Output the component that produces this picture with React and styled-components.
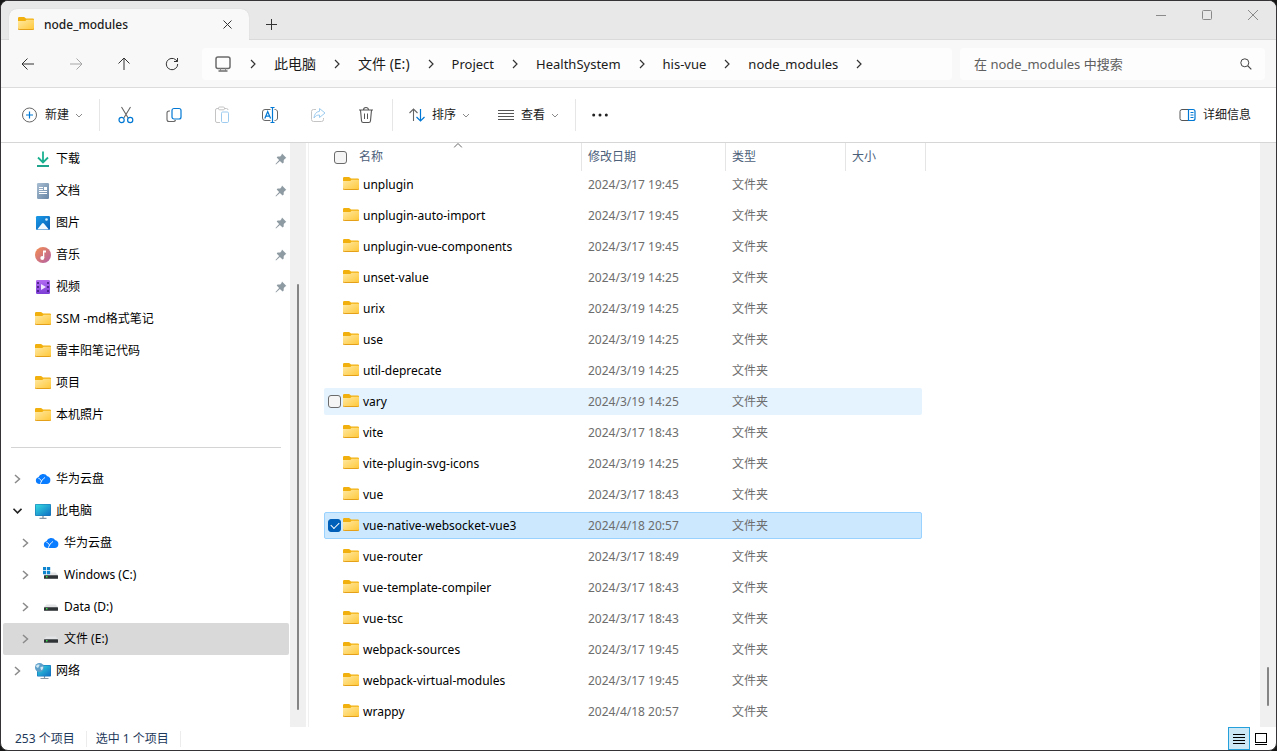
import React, { useState } from "react";
import styled, { createGlobalStyle } from "styled-components";

const DAY_17 = "2024/3/17 19:45";
const DAY_19 = "2024/3/19 14:25";
const DAY_17_EVENING = "2024/3/17 18:43";

const files = [
  { name: "unplugin", date: DAY_17 },
  { name: "unplugin-auto-import", date: DAY_17 },
  { name: "unplugin-vue-components", date: DAY_17 },
  { name: "unset-value", date: DAY_19 },
  { name: "urix", date: DAY_19 },
  { name: "use", date: DAY_19 },
  { name: "util-deprecate", date: DAY_19 },
  { name: "vary", date: DAY_19, hot: true },
  { name: "vite", date: DAY_17_EVENING },
  { name: "vite-plugin-svg-icons", date: DAY_19 },
  { name: "vue", date: DAY_17_EVENING },
  { name: "vue-native-websocket-vue3", date: "2024/4/18 20:57" },
  { name: "vue-router", date: "2024/3/17 18:49" },
  { name: "vue-template-compiler", date: DAY_17_EVENING },
  { name: "vue-tsc", date: DAY_17_EVENING },
  { name: "webpack-sources", date: DAY_17 },
  { name: "webpack-virtual-modules", date: DAY_17 },
  { name: "wrappy", date: "2024/4/18 20:57" },
];

const crumbs = [
  { label: "此电脑" },
  { label: "文件 (E:)" },
  { label: "Project", latin: true },
  { label: "HealthSystem", latin: true },
  { label: "his-vue", latin: true },
  { label: "node_modules", latin: true },
];

export default function App() {
  const [selected, setSelected] = useState(["vue-native-websocket-vue3"]);

  const toggle = (name) =>
    setSelected((prev) =>
      prev.includes(name) ? prev.filter((n) => n !== name) : [...prev, name]
    );

  return (
    <>
      <GlobalStyle />
      <Window>
        <TitleBar />
        <NavBar />
        <Toolbar />
        <Content>
          <Sidebar />
          <FileList selected={selected} toggle={toggle} />
        </Content>
        <StatusBar count={selected.length} />
      </Window>
    </>
  );
}

function TitleBar() {
  return (
    <TitleOuter>
      <Tab>
        <FolderIcon />
        <TabTitle>node_modules</TabTitle>
        <TabClose aria-label="关闭标签页">
          <LineIcon size={9} d="M0.5 0.5l8 8M8.5 0.5l-8 8" />
        </TabClose>
      </Tab>
      <NewTab aria-label="新标签页">
        <LineIcon size={11} d="M5.5 0v11M0 5.5h11" />
      </NewTab>
      <WindowButtons>
        <WindowButton aria-label="最小化">
          <LineIcon size={10} d="M0 5.5h10" />
        </WindowButton>
        <WindowButton aria-label="最大化">
          <LineIcon
            size={10}
            d="M1.5 0.5h7a1 1 0 0 1 1 1v7a1 1 0 0 1-1 1h-7a1 1 0 0 1-1-1v-7a1 1 0 0 1 1-1z"
          />
        </WindowButton>
        <WindowButton aria-label="关闭">
          <LineIcon size={10} d="M0 0l10 10M10 0L0 10" />
        </WindowButton>
      </WindowButtons>
    </TitleOuter>
  );
}

function NavBar() {
  return (
    <NavOuter>
      <NavButton aria-label="后退">
        <LineIcon size={14} d="M13 7H1.2M6.5 1.5L1 7l5.500 5.500" />
      </NavButton>
      <NavButton aria-label="前进" disabled>
        <LineIcon size={14} d="M1 7h11.800M7.500 1.500L13 7l-5.500 5.500" />
      </NavButton>
      <NavButton aria-label="向上">
        <LineIcon size={14} d="M7 13V1.200M1.500 6.500L7 1l5.500 5.500" />
      </NavButton>
      <NavButton aria-label="刷新">
        <LineIcon
          size={14}
          d="M12.700 7A5.700 5.700 0 1 1 10.800 2.800L12.500 4.400M12.500 1v3.500H9"
        />
      </NavButton>
      <Address>
        <svg width="18" height="18" viewBox="0 0 18 18" fill="none">
          <rect
            x="2"
            y="2"
            width="14"
            height="11.500"
            rx="2"
            stroke="#6b6b6b"
            strokeWidth="1.500"
          />
          <path d="M6.500 13.500v2M11.500 13.500v2" stroke="#8a8a8a" />
          <path d="M4.500 16h9" stroke="#6b6b6b" strokeWidth="1.400" />
        </svg>
        <CrumbArrow />
        {crumbs.map((crumb) => (
          <React.Fragment key={crumb.label}>
            <Crumb href="#" $latin={crumb.latin}>
              {crumb.label}
            </Crumb>
            <CrumbArrow />
          </React.Fragment>
        ))}
      </Address>
      <Search>
        <SearchInput
          type="text"
          aria-label="搜索"
          placeholder="在 node_modules 中搜索"
        />
        <svg width="12" height="12" viewBox="0 0 12 12" fill="none">
          <circle cx="4.800" cy="4.800" r="4" stroke="#444" />
          <path d="M7.800 7.800L11.300 11.300" stroke="#444" strokeWidth="1.200" />
        </svg>
      </Search>
    </NavOuter>
  );
}

function Toolbar() {
  return (
    <ToolbarOuter>
      <TextButton>
        <svg width="16" height="16" viewBox="0 0 16 16" fill="none">
          <circle cx="7.500" cy="8" r="7" stroke="#666" />
          <path d="M7.500 4.500v7M4 8h7" stroke="#0078d4" strokeWidth="1.200" />
        </svg>
        新建
        <DropArrow />
      </TextButton>
      <Divider />
      <IconButton aria-label="剪切">
        <svg width="16" height="18" viewBox="0 0 16 18" fill="none">
          <path
            d="M3.500 1l6.700 11M12.500 1L5.800 12"
            stroke="#666"
            strokeWidth="1.100"
          />
          <circle cx="3.600" cy="14" r="2.600" stroke="#0078d4" strokeWidth="1.200" />
          <circle cx="12.200" cy="14" r="2.600" stroke="#0078d4" strokeWidth="1.200" />
        </svg>
      </IconButton>
      <IconButton aria-label="复制">
        <svg width="16" height="16" viewBox="0 0 16 16" fill="none">
          <path
            d="M4 4H3a2 2 0 0 0-2 2v6.500a2 2 0 0 0 2 2h4.500a2 2 0 0 0 2-1.500"
            stroke="#666"
            strokeWidth="1.100"
          />
          <rect
            x="6"
            y="1.500"
            width="9"
            height="10.500"
            rx="2"
            stroke="#0078d4"
            strokeWidth="1.200"
          />
        </svg>
      </IconButton>
      <IconButton aria-label="粘贴" disabled>
        <svg width="16" height="18" viewBox="0 0 16 18" fill="none">
          <path
            d="M5 2.500H3a1.500 1.500 0 0 0-1.500 1.500v11A1.500 1.500 0 0 0 3 16.500h3M10 2.500h2.500A1.500 1.500 0 0 1 14 4"
            stroke="#c4c4c4"
          />
          <rect x="4.500" y="1" width="6" height="2.800" rx="1.200" stroke="#c4c4c4" />
          <rect x="7.500" y="6" width="7" height="10.500" rx="1.200" stroke="#9ccbef" />
        </svg>
      </IconButton>
      <IconButton aria-label="重命名">
        <svg width="18" height="16" viewBox="0 0 18 16" fill="none">
          <path
            d="M9.500 2.500H4a2.500 2.500 0 0 0-2.500 2.500v6A2.500 2.500 0 0 0 4 13.500h5.500M13.500 2.500A2.500 2.500 0 0 1 16.500 5v6a2.500 2.500 0 0 1-3 2.500"
            stroke="#666"
          />
          <path
            d="M3.800 11.500L6.700 4.500l2.900 7M4.800 9.200h3.800"
            stroke="#0078d4"
            strokeWidth="1.200"
          />
          <path d="M9.500 0.500h4M9.500 15.500h4M11.500 0.500v15" stroke="#0078d4" strokeWidth="1.200" />
        </svg>
      </IconButton>
      <IconButton aria-label="共享" disabled>
        <svg width="16" height="16" viewBox="0 0 16 16" fill="none">
          <path
            d="M6 2.500H3.500a2 2 0 0 0-2 2v8a2 2 0 0 0 2 2h8a2 2 0 0 0 2-2V11"
            stroke="#c4c4c4"
          />
          <path
            d="M9.500 1.500L15 6l-5.500 4.500V8C7 8 5.500 8.800 4 11c.2-3.500 2-6.300 5.500-6.700z"
            stroke="#9ccbef"
            strokeLinejoin="round"
          />
        </svg>
      </IconButton>
      <IconButton aria-label="删除">
        <svg width="16" height="18" viewBox="0 0 16 18" fill="none">
          <path
            d="M1 4h14M5.500 4a2.500 2.500 0 0 1 5 0M2.500 4l1 10.800a1.800 1.800 0 0 0 1.800 1.700h5.400a1.800 1.800 0 0 0 1.800-1.700l1-10.800"
            stroke="#555"
            strokeWidth="1.100"
          />
          <path d="M6.500 7.500v5.500M9.500 7.500v5.500" stroke="#555" />
        </svg>
      </IconButton>
      <Divider />
      <TextButton>
        <svg width="16" height="16" viewBox="0 0 16 16" fill="none">
          <path d="M4.500 14V2M0.500 6L4.500 2l4 4" stroke="#666" strokeWidth="1.100" />
          <path d="M11.500 2v12M7.500 10l4 4 4-4" stroke="#0078d4" strokeWidth="1.200" />
        </svg>
        排序
        <DropArrow />
      </TextButton>
      <TextButton>
        <svg width="16" height="16" viewBox="0 0 16 16" fill="none">
          <path d="M0 3.500h16M0 6.500h16M0 9.500h16M0 12.500h16" stroke="#555" />
        </svg>
        查看
        <DropArrow />
      </TextButton>
      <Divider />
      <MoreButton aria-label="更多">
        <svg width="16" height="4" viewBox="0 0 16 4" fill="#222">
          <circle cx="1.700" cy="2" r="1.500" />
          <circle cx="8" cy="2" r="1.500" />
          <circle cx="14.300" cy="2" r="1.500" />
        </svg>
      </MoreButton>
      <DetailsButton>
        <svg width="17" height="14" viewBox="0 0 17 14" fill="none">
          <path
            d="M9.500 1.500H3a2 2 0 0 0-2 2v7a2 2 0 0 0 2 2h6.500"
            stroke="#555"
          />
          <path
            d="M9.500 1.500H14a2 2 0 0 1 2 2v7a2 2 0 0 1-2 2H9.500z"
            stroke="#0078d4"
            strokeWidth="1.200"
          />
          <path d="M11.500 4.500h3M11.500 7h3M11.500 9.500h3" stroke="#0078d4" />
        </svg>
        详细信息
      </DetailsButton>
    </ToolbarOuter>
  );
}

const pinned = [
  { label: "下载", icon: <DownloadIcon />, pin: true },
  { label: "文档", icon: <DocumentIcon />, pin: true },
  { label: "图片", icon: <PictureIcon />, pin: true },
  { label: "音乐", icon: <MusicIcon />, pin: true },
  { label: "视频", icon: <VideoIcon />, pin: true },
  { label: "SSM -md格式笔记", icon: <FolderIcon /> },
  { label: "雷丰阳笔记代码", icon: <FolderIcon /> },
  { label: "项目", icon: <FolderIcon /> },
  { label: "本机照片", icon: <FolderIcon /> },
];

const tree = [
  { label: "华为云盘", icon: <CloudIcon />, arrow: "right" },
  { label: "此电脑", icon: <ComputerIcon />, arrow: "down" },
  { label: "华为云盘", icon: <CloudIcon />, arrow: "right", depth: 1 },
  { label: "Windows (C:)", icon: <DriveIcon system />, arrow: "right", depth: 1 },
  { label: "Data (D:)", icon: <DriveIcon />, arrow: "right", depth: 1 },
  { label: "文件 (E:)", icon: <DriveIcon />, arrow: "right", depth: 1, active: true },
  { label: "网络", icon: <NetworkIcon />, arrow: "right" },
];

function Sidebar() {
  return (
    <SidebarOuter>
      <Tree>
        {pinned.map((item) => (
          <TreeItem key={item.label} item={item} />
        ))}
        <TreeDivider />
        {tree.map((item, i) => (
          <TreeItem key={i} item={item} />
        ))}
      </Tree>
      <ScrollTrack>
        <SideThumb />
      </ScrollTrack>
    </SidebarOuter>
  );
}

function TreeItem({ item }) {
  return (
    <li>
      <TreeButton
        $depth={item.depth || 0}
        $active={item.active}
        aria-expanded={item.arrow ? item.arrow === "down" : undefined}
      >
        <Expander>
          {item.arrow === "right" && (
            <svg width="8" height="10" viewBox="0 0 8 10" fill="none">
              <path d="M2 1l4.500 4L2 9" stroke="#8a8a8a" strokeWidth="1.500" />
            </svg>
          )}
          {item.arrow === "down" && (
            <svg width="10" height="8" viewBox="0 0 10 8" fill="none">
              <path d="M1.500 1.800l4 4 4-4" stroke="#222" strokeWidth="1.600" />
            </svg>
          )}
        </Expander>
        {item.icon}
        <TreeLabel>{item.label}</TreeLabel>
        {item.pin && <PinIcon />}
      </TreeButton>
    </li>
  );
}

function FileList({ selected, toggle }) {
  return (
    <Main>
      <TableArea>
        <Table>
          <Head>
            <HeadRow>
              <NameHead>
                <Check type="checkbox" aria-label="全选" />
                名称
                <SortMark width="9" height="5" viewBox="0 0 9 5" fill="none">
                  <path d="M0.500 4.500l4-4 4 4" stroke="#666" />
                </SortMark>
              </NameHead>
              <HeadCell>修改日期</HeadCell>
              <HeadCell>类型</HeadCell>
              <HeadCell>大小</HeadCell>
            </HeadRow>
          </Head>
          <Body>
            {files.map((file) => {
              const on = selected.includes(file.name);
              return (
                <Row key={file.name} $hot={file.hot} $selected={on}>
                  <NameCell>
                    <Check
                      type="checkbox"
                      aria-label={file.name}
                      checked={on}
                      onChange={() => toggle(file.name)}
                    />
                    <FolderIcon />
                    <span>{file.name}</span>
                  </NameCell>
                  <Cell>{file.date}</Cell>
                  <Cell>文件夹</Cell>
                  <Cell />
                </Row>
              );
            })}
          </Body>
        </Table>
      </TableArea>
      <ScrollTrack>
        <MainThumb />
      </ScrollTrack>
    </Main>
  );
}

function StatusBar({ count }) {
  return (
    <StatusOuter>
      <StatusText>253 个项目</StatusText>
      <StatusText>选中 {count} 个项目</StatusText>
      <ViewButtons>
        <ViewButton aria-label="详细信息视图" aria-pressed="true" $active>
          <svg width="14" height="12" viewBox="0 0 14 12" fill="none">
            <path d="M1 1.500h12M1 4.500h12M1 7.500h12M1 10.500h12" stroke="#000" />
          </svg>
        </ViewButton>
        <ViewButton aria-label="大图标视图" aria-pressed="false">
          <svg width="14" height="14" viewBox="0 0 14 14" fill="none">
            <rect x="1.500" y="1.500" width="11" height="9" stroke="#000" />
            <path d="M1 12.500h12" stroke="#000" />
          </svg>
        </ViewButton>
      </ViewButtons>
    </StatusOuter>
  );
}

/* icons */

function LineIcon({ size, d }) {
  return (
    <svg width={size} height={size} viewBox={`0 0 ${size} ${size}`} fill="none">
      <path d={d} stroke="currentColor" />
    </svg>
  );
}

function CrumbArrow() {
  return (
    <svg width="8" height="10" viewBox="0 0 8 10" fill="none">
      <path d="M2 1l4 4-4 4" stroke="#333" strokeWidth="1.200" />
    </svg>
  );
}

function DropArrow() {
  return (
    <ArrowSvg width="8" height="5" viewBox="0 0 8 5" fill="none">
      <path d="M1 1l3 3 3-3" stroke="#8a8a8a" />
    </ArrowSvg>
  );
}

function FolderIcon() {
  return (
    <svg width="16" height="15" viewBox="0 0 16 15">
      <defs>
        <linearGradient id="folder" x1="0" y1="0" x2="1" y2="1">
          <stop offset="0" stopColor="#ffe9a4" />
          <stop offset="1" stopColor="#ffc736" />
        </linearGradient>
      </defs>
      <path
        d="M0 1.200A1.200 1.200 0 0 1 1.200 0h4.600c.5 0 .8.200 1.100.500L8 1.500h6.800A1.200 1.200 0 0 1 16 2.700V7H0z"
        fill="#f2b00e"
      />
      <path
        d="M0 4h6.500c.6 0 1-.2 1.400-.6l.6-.7H15.200a.8.8 0 0 1 .8.800v8.300A1.200 1.200 0 0 1 14.800 13H1.200A1.200 1.200 0 0 1 0 11.800z"
        fill="url(#folder)"
      />
      <path
        d="M0 11.600A1.300 1.300 0 0 0 1.300 12.500h13.400a1.300 1.300 0 0 0 1.300-.9"
        fill="none"
        stroke="#e5a01a"
      />
    </svg>
  );
}

function DownloadIcon() {
  return (
    <svg width="16" height="16" viewBox="0 0 16 16" fill="none">
      <path d="M8 0.500v11M3 6.500l5 5 5-5" stroke="#1bb08f" strokeWidth="1.800" />
      <path d="M2 15h12" stroke="#1fa58d" strokeWidth="1.800" />
    </svg>
  );
}

function DocumentIcon() {
  return (
    <svg width="16" height="16" viewBox="0 0 16 16">
      <defs>
        <linearGradient id="doc" x1="0" y1="0" x2="1" y2="1">
          <stop offset="0" stopColor="#a9bed2" />
          <stop offset="1" stopColor="#6785a6" />
        </linearGradient>
      </defs>
      <rect x="2" width="12" height="16" rx="1.200" fill="url(#doc)" />
      <path
        d="M4 4.500h4M4 6.500h4M4 8.500h8M4 10.500h8"
        stroke="#fff"
        strokeWidth="1.100"
      />
      <rect x="9" y="4" width="3" height="3" fill="#fff" />
    </svg>
  );
}

function PictureIcon() {
  return (
    <svg width="16" height="16" viewBox="0 0 16 16">
      <defs>
        <linearGradient id="pic" x1="0" y1="0" x2="1" y2="1">
          <stop offset="0" stopColor="#1a9be8" />
          <stop offset="1" stopColor="#0a5eb5" />
        </linearGradient>
      </defs>
      <rect x="1" y="1" width="14" height="14" rx="1.200" fill="url(#pic)" />
      <path d="M2.200 14.500L7 8.600a1.200 1.200 0 0 1 1.900 0l4.900 5.900z" fill="#f3f9ff" />
      <circle cx="11.500" cy="4.500" r="1.300" fill="#d4efff" />
    </svg>
  );
}

function MusicIcon() {
  return (
    <svg width="16" height="16" viewBox="0 0 16 16">
      <defs>
        <linearGradient id="music" x1="0" y1="0" x2="1" y2="1">
          <stop offset="0.100" stopColor="#ee8a58" />
          <stop offset="1" stopColor="#b25fa6" />
        </linearGradient>
      </defs>
      <circle cx="8" cy="8" r="8" fill="url(#music)" />
      <path d="M8 3.500h3v2H9.300v5.500H8z" fill="#fff" />
      <circle cx="7.300" cy="11" r="2" fill="#fff" />
    </svg>
  );
}

function VideoIcon() {
  return (
    <svg width="16" height="16" viewBox="0 0 16 16">
      <defs>
        <linearGradient id="video" x1="0" y1="0" x2="0" y2="1">
          <stop offset="0" stopColor="#b36cf2" />
          <stop offset="1" stopColor="#7d3ed6" />
        </linearGradient>
      </defs>
      <rect x="1" y="1" width="14" height="14" rx="1.200" fill="url(#video)" />
      <path
        d="M2.200 4h1.600M2.200 8h1.600M2.200 12h1.600M12.200 4h1.600M12.200 8h1.600M12.200 12h1.600"
        stroke="#3d1a78"
        strokeWidth="1.800"
      />
      <path d="M6 5l5 3-5 3z" fill="#f1e6ff" />
    </svg>
  );
}

function CloudIcon() {
  return (
    <svg width="16" height="16" viewBox="0 0 16 16">
      <path
        d="M4 13a3.400 3.400 0 0 1-.5-6.700A4.900 4.900 0 0 1 12.300 5.300 3.900 3.900 0 0 1 11.700 13z"
        fill="#0a7cff"
      />
      <path
        d="M3.500 7.500c1.800.2 2.500 1.500 3 3M5.300 12.800c1-2.800 2.500-5 4.700-6.300"
        fill="none"
        stroke="#fff"
        strokeWidth="0.900"
      />
    </svg>
  );
}

function ComputerIcon() {
  return (
    <svg width="16" height="16" viewBox="0 0 16 16">
      <defs>
        <linearGradient id="screen" x1="0" y1="0" x2="1" y2="1">
          <stop offset="0" stopColor="#35dbe0" />
          <stop offset="1" stopColor="#0f6fc4" />
        </linearGradient>
      </defs>
      <path d="M8 12v3M4.500 15.500h7" stroke="#8796a5" strokeWidth="1.400" />
      <rect x="0" y="1" width="16" height="12" rx="1" fill="#1b74b5" />
      <rect x="0.600" y="1.600" width="14.800" height="10.800" rx="0.600" fill="url(#screen)" />
    </svg>
  );
}

function DriveIcon({ system }) {
  return (
    <svg width="16" height="16" viewBox="0 0 16 16">
      <path d="M3.500 5.500h9L15 8H1z" fill="#e2e4e6" />
      <rect x="1" y="8" width="14" height="4" rx="0.500" fill="#5b5e61" />
      <rect x="1" y="9" width="14" height="2" fill="#2f3235" />
      <rect x="3" y="9" width="1.500" height="1.500" fill="#37e04c" />
      {system && (
        <>
          <rect x="0" y="0" width="7.500" height="7.500" fill="#fff" />
          <path
            d="M0 0h3.200v3.200H0zM4 0h3.200v3.200H4zM0 4h3.200v3.200H0zM4 4h3.200v3.200H4z"
            fill="#0f84cf"
          />
        </>
      )}
    </svg>
  );
}

function NetworkIcon() {
  return (
    <svg width="16" height="16" viewBox="0 0 16 16">
      <path d="M9.500 13v2.500M5.500 15.500h8" stroke="#8796a5" strokeWidth="1.200" />
      <rect x="2" y="2" width="14" height="11.500" rx="0.800" fill="#1673bd" />
      <rect x="2.600" y="2.600" width="12.800" height="10.300" fill="url(#screen)" />
      <circle cx="4.500" cy="4.500" r="4.500" fill="#5d9fc9" />
      <path
        d="M1 3c1-1.600 2.600-1.700 3.600-1.500 0 1.500-1 2-1.300 3.200C2.500 5 1.200 4.500 1 3zM5.500 4l2.600-.5c.4 1.500-.3 2.800-1.400 3.700-1-.6-1.400-1.900-1.200-3.200z"
        fill="#cfe8f3"
      />
    </svg>
  );
}

function PinIcon() {
  return (
    <svg width="12" height="12" viewBox="0 0 12 12">
      <path
        d="M7 0.600L11.400 5 10.200 5.600 8.800 7 8.600 9.700 7.600 10.600 4.900 7.900 1 11.500 0.500 11 4.100 7.100 1.700 4.500 2.600 3.600 5.200 3.500 6.500 2z"
        fill="#8f9ba3"
      />
    </svg>
  );
}

/* styles */

const GlobalStyle = createGlobalStyle`
  * {
    box-sizing: border-box;
  }

  body {
    margin: 0;
    background: #161616;
    font: 12px/16px "Noto Sans", "Noto Sans CJK SC", sans-serif;
    color: #000;
  }

  button,
  input {
    font: inherit;
    color: inherit;
  }

  button {
    padding: 0;
    border: none;
    background: none;
  }

  svg {
    flex-shrink: 0;
  }
`;

const Window = styled.div`
  display: flex;
  flex-direction: column;
  height: 100vh;
  border: 1px solid #353335;
  border-radius: 8px;
  background: #fff;
  overflow: hidden;
`;

const TitleOuter = styled.header`
  display: flex;
  flex: 0 0 39px;
  padding-left: 8px;
  background: #e8e8e8;
  border-bottom: 1px solid #dadada;
`;

const Tab = styled.div`
  display: flex;
  align-items: center;
  width: 240px;
  margin: 8px 0 -1px;
  padding: 0 17px 0 9px;
  border-radius: 8px 8px 0 0;
  background: #f8f8f8;
  box-shadow: 0 0 1px #c4c4c4;
  clip-path: inset(-2px -2px 0 -2px);
`;

const TabTitle = styled.span`
  flex: 1;
  margin-left: 10px;
  font-weight: 500;
  color: #1b1b1b;
`;

const TabClose = styled.button`
  display: flex;
  color: #333;
`;

const NewTab = styled.button`
  display: flex;
  align-items: center;
  justify-content: center;
  width: 45px;
  padding-top: 8px;
  color: #333;
`;

const WindowButtons = styled.div`
  display: flex;
  margin-left: auto;
`;

const WindowButton = styled.button`
  display: flex;
  align-items: center;
  justify-content: center;
  width: 46px;
  height: 28px;
  color: #8a8a8a;
`;

const NavOuter = styled.nav`
  display: flex;
  align-items: center;
  flex: 0 0 48px;
  padding: 0 11px 0 3px;
  background: #f8f8f8;
  border-bottom: 1px solid #dcdcdc;
`;

const NavButton = styled.button`
  display: flex;
  align-items: center;
  justify-content: center;
  width: 48px;
  height: 32px;
  color: #333;

  &:disabled {
    color: #a6a6a6;
  }
`;

const Address = styled.div`
  display: flex;
  align-items: center;
  gap: 17px;
  flex: 1;
  min-width: 0;
  height: 32px;
  margin-left: 6px;
  padding-left: 12px;
  border-radius: 4px;
  background: #fdfdfd;
  overflow: hidden;
`;

const Crumb = styled.a`
  font-size: ${(props) => (props.$latin ? "13px" : "14px")};
  line-height: 20px;
  white-space: nowrap;
  text-decoration: none;
  color: #1b1b1b;
`;

const Search = styled.label`
  display: flex;
  align-items: center;
  flex: 0 0 305px;
  height: 32px;
  margin-left: 8px;
  padding: 0 13px 0 14px;
  border-radius: 4px;
  background: #fdfdfd;
`;

const SearchInput = styled.input`
  flex: 1;
  min-width: 0;
  padding: 0;
  border: none;
  outline: none;
  background: none;
  font-size: 13px;
  line-height: 20px;

  &::placeholder {
    color: #606060;
  }
`;

const ToolbarOuter = styled.div`
  display: flex;
  align-items: center;
  flex: 0 0 55px;
  padding: 0 11px 0 7px;
  border-bottom: 1px solid #d6d6d6;
`;

const TextButton = styled.button`
  display: flex;
  align-items: center;
  gap: 7px;
  height: 32px;
  padding: 0 14px;
  white-space: nowrap;
  color: #1b1b1b;
`;

const ArrowSvg = styled.svg`
  margin-left: -1px;
`;

const IconButton = styled.button`
  display: flex;
  align-items: center;
  justify-content: center;
  width: 48px;
  height: 32px;
`;

const MoreButton = styled(IconButton)`
  width: 44px;
`;

const DetailsButton = styled(TextButton)`
  margin-left: auto;
`;

const Divider = styled.span`
  width: 1px;
  height: 32px;
  margin: 0 2px;
  background: #e6e6e6;
`;

const Content = styled.div`
  display: flex;
  flex: 1;
  min-height: 0;
`;

const SidebarOuter = styled.aside`
  display: flex;
  flex: 0 0 305px;
`;

const Tree = styled.ul`
  flex: 1;
  margin: 0;
  padding: 0 1px 0 2px;
  list-style: none;
  overflow: hidden;
`;

const TreeButton = styled.button`
  display: flex;
  align-items: center;
  width: 100%;
  height: 32px;
  padding-left: ${(props) => 6 + props.$depth * 8}px;
  padding-right: 2px;
  border-radius: 2px;
  text-align: left;
  background: ${(props) => (props.$active ? "#d9d9d9" : "transparent")};
`;

const Expander = styled.span`
  display: flex;
  justify-content: center;
  width: 16px;
  margin-right: 10px;
`;

const TreeLabel = styled.span`
  flex: 1;
  margin-left: 5px;
  white-space: nowrap;
`;

const TreeDivider = styled.li`
  height: 1px;
  margin: 16px 8px 15px;
  background: #d4d4d4;
`;

const ScrollTrack = styled.div`
  display: flex;
  flex-direction: column;
  flex: 0 0 16px;
  align-items: center;
  background: #f0f0f0;
`;

const SideThumb = styled.div`
  width: 2px;
  height: 73%;
  margin-top: auto;
  margin-bottom: 17px;
  border-radius: 1px;
  background: #858585;
`;

const MainThumb = styled.div`
  width: 2px;
  height: 39px;
  margin-top: auto;
  margin-bottom: 21px;
  border-radius: 1px;
  background: #858585;
`;

const Main = styled.main`
  display: flex;
  flex: 1;
  min-width: 0;
  margin-left: 2px;
  border-left: 1px solid #f0f0f0;
`;

const TableArea = styled.div`
  flex: 1;
  min-width: 0;
  padding-left: 15px;
  overflow: hidden;
`;

const Table = styled.table`
  display: block;
`;

const Head = styled.thead`
  display: block;
`;

const HeadRow = styled.tr`
  display: grid;
  grid-template-columns: 257px 144px 120px 81px;
  height: 28px;
`;

const HeadCell = styled.th`
  padding: 6px 0 0 6px;
  border-left: 1px solid #e5e5e5;
  font-weight: 400;
  text-align: left;
  color: #4c607a;

  &:last-child {
    border-right: 1px solid #e5e5e5;
  }
`;

const NameHead = styled(HeadCell)`
  position: relative;
  display: flex;
  align-items: center;
  gap: 12px;
  margin-left: 10px;
  padding: 0;
  border-left: none;
`;

const SortMark = styled.svg`
  position: absolute;
  top: 0;
  left: 50%;
  transform: translateX(-50%);
`;

const Check = styled.input`
  appearance: none;
  display: flex;
  align-items: center;
  justify-content: center;
  flex: 0 0 13px;
  height: 13px;
  margin: 0;
  border: 1px solid #6b6b6b;
  border-radius: 3px;
  background: #f5f5f5;

  &:checked {
    border-color: #005fb8;
    background: #005fb8;
  }

  &:checked::after {
    content: "";
    width: 7px;
    height: 4px;
    margin-bottom: 2px;
    border: solid #fff;
    border-width: 0 0 1px 1px;
    transform: rotate(-45deg);
  }
`;

const Body = styled.tbody`
  display: flex;
  flex-direction: column;
  gap: 4px;
`;

const Row = styled.tr`
  display: grid;
  grid-template-columns: 256px 144px 120px 1fr;
  align-items: center;
  width: 598px;
  height: 27px;
  border: 1px solid ${(props) => (props.$selected ? "#99d1ff" : "transparent")};
  border-radius: 2px;
  background: ${(props) =>
    props.$selected ? "#cce8ff" : props.$hot ? "#e5f3ff" : "#fff"};

  ${Check} {
    opacity: ${(props) => (props.$selected || props.$hot ? 1 : 0)};
  }

  &:hover ${Check} {
    opacity: 1;
  }
`;

const Cell = styled.td`
  padding: 0 0 0 7px;
  white-space: nowrap;
  color: #6d6d6d;
`;

const NameCell = styled.td`
  display: flex;
  align-items: center;
  padding: 0 0 0 3px;
  white-space: nowrap;

  svg {
    margin: 0 4px 0 2px;
  }
`;

const StatusOuter = styled.footer`
  display: flex;
  align-items: center;
  flex: 0 0 23px;
  padding: 0 4px 0 14px;
  color: #1e395b;
`;

const StatusText = styled.span`
  margin-right: 9px;
  padding-right: 11px;
  border-right: 1px solid #ececec;
`;

const ViewButtons = styled.div`
  display: flex;
  align-self: stretch;
  margin-left: auto;
`;

const ViewButton = styled.button`
  display: flex;
  align-items: center;
  justify-content: center;
  width: 22px;
  height: 23px;
  border: 1px solid ${(props) => (props.$active ? "#26a0da" : "transparent")};
  background: ${(props) => (props.$active ? "#cce8f6" : "transparent")};
`;
